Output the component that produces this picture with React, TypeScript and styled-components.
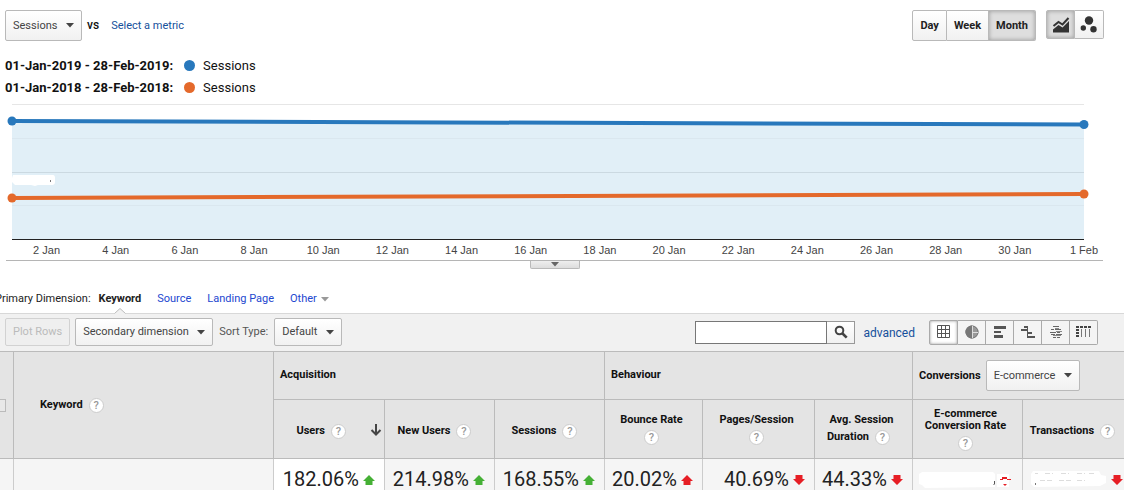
import React from "react";
import styled, { createGlobalStyle, css } from "styled-components";

const GlobalStyle = createGlobalStyle`
  * { box-sizing: border-box; }
  body { margin: 0; background: #fff; color: #222; font: 11px/14px Roboto, sans-serif; }
  button, input, select { font: inherit; color: inherit; margin: 0; }
  a { text-decoration: none; }
`;

const Page = styled.main`
  overflow: hidden;
`;

/* ---------- shared controls ---------- */

const raised = css`
  border: 1px solid #b9b9b9;
  border-radius: 2px;
  background: linear-gradient(#fff, #f1f1f1);
`;

const SelectBox = styled.label<{ $height: number }>`
  ${raised}
  display: inline-flex;
  align-items: center;
  position: relative;
  height: ${(p) => p.$height}px;
`;

const NativeSelect = styled.select`
  appearance: none;
  border: 0;
  outline: 0;
  height: 100%;
  padding: 0 23px 0 7px;
  background: transparent;
  color: #444;
`;

const CaretSlot = styled.span`
  position: absolute;
  right: 7px;
  display: flex;
  pointer-events: none;
`;

const Caret = ({ color = "#444" }: { color?: string }) => (
  <svg width="8" height="5" viewBox="0 0 8 5" aria-hidden="true">
    <path d="M0 0h8L4 4.6z" fill={color} />
  </svg>
);

const Select = ({ label, value, height }: { label: string; value: string; height: number }) => (
  <SelectBox $height={height}>
    <NativeSelect aria-label={label} defaultValue={value}>
      <option>{value}</option>
    </NativeSelect>
    <CaretSlot>
      <Caret />
    </CaretSlot>
  </SelectBox>
);

const HelpButton = styled.button`
  width: 15px;
  height: 15px;
  margin: 0 6px;
  padding: 0;
  border: 1px solid #ccc;
  border-radius: 50%;
  background: #fff;
  color: #999;
  font-size: 11px;
  font-weight: 500;
  line-height: 13px;
  text-align: center;
  vertical-align: middle;
`;

const Help = ({ topic }: { topic: string }) => (
  <HelpButton type="button" title={`Help: ${topic}`}>?</HelpButton>
);

/* ---------- metric bar ---------- */

const MetricBar = styled.header`
  display: flex;
  align-items: flex-start;
  padding: 10px 20px 0 5px;
`;

const MetricPick = styled.div`
  display: flex;
  align-items: center;
  flex: 1;
`;

const Versus = styled.span`
  margin: 0 12px 2px 5px;
  color: #111;
  font-size: 12px;
  font-weight: 500;
`;

const MetricLink = styled.a`
  color: #15509b;
`;

const Segments = styled.div`
  display: flex;
  margin-left: 10px;
`;

const Segment = styled.button<{ $active?: boolean; $icon?: boolean }>`
  ${raised}
  display: flex;
  align-items: center;
  justify-content: center;
  width: ${(p) => (p.$icon ? "29px" : "auto")};
  height: ${(p) => (p.$icon ? 29 : 31)}px;
  padding: 0 ${(p) => (p.$icon ? 0 : 7)}px;
  font-weight: 700;
  border-radius: 0;
  & + & { border-left: 0; }
  &:first-child { border-radius: 2px 0 0 2px; }
  &:last-child { border-radius: 0 2px 2px 0; }
  ${(p) =>
    p.$active &&
    css`
      background: #dedede;
      box-shadow: inset 0 0 4px #999;
    `}
`;

/* ---------- legend ---------- */

const Legend = styled.ul`
  margin: 14px 0 0;
  padding: 0 5px;
  list-style: none;
  color: #111;
  font-size: 13px;
  line-height: 22px;
`;

const LegendRow = styled.li`
  display: flex;
  align-items: center;
`;

const Swatch = styled.span<{ $color: string }>`
  width: 11px;
  height: 11px;
  margin: 0 8px 1px 11px;
  border-radius: 50%;
  background: ${(p) => p.$color};
`;

/* ---------- chart ---------- */

const ChartPanel = styled.section`
  margin: 0 21px 0 6px;
  padding: 0 19px 0 6px;
  border-bottom: 1px solid #b5b5b5;
`;

const ChartSvg = styled.svg`
  display: block;
  width: 100%;
  height: 161px;
  overflow: visible;
  font: 11px "Liberation Sans", sans-serif;
`;

const HandleRow = styled.div`
  display: flex;
  justify-content: center;
  margin: 0 21px 0 6px;
`;

const Handle = styled.button`
  display: flex;
  align-items: center;
  justify-content: center;
  width: 50px;
  height: 8px;
  padding: 0;
  border: 1px solid #b9b9b9;
  border-top: 0;
  border-radius: 0 0 2px 2px;
  background: linear-gradient(#eee, #ddd);
`;

const BLUE = "#2878bc";
const ORANGE = "#e4692b";
const days = Array.from({ length: 15 }, (_, i) => (i + 1) * 2);

const Chart = () => (
  <ChartSvg role="img" aria-label="Sessions per month">
    <svg width="100%" height="141" viewBox="0 0 100 141" preserveAspectRatio="none">
      <path d="M0 22L100 25.500V141H0z" fill="#e1eff7" />
    </svg>
    <g shapeRendering="crispEdges">
      <rect y="5" width="100%" height="1" fill="#e6e6e6" />
      <rect y="39" width="100%" height="1" fill="#dae7ef" />
      <rect y="73" width="100%" height="1" fill="#cbd9e1" />
      <rect y="106" width="100%" height="1" fill="#dae7ef" />
      <rect y="140" width="100%" height="1" fill="#222" />
    </g>
    <path d="M1 76h40q2 0 2 3v4q0 3-3 3H26l-3 1-4-1H3l-3-3v-4z" fill="#fff" />
    <path d="M38.500 81v2" stroke="#777" />
    <line x1="0" y1="22" x2="100%" y2="25.500" stroke={BLUE} strokeWidth="4" />
    <line x1="0" y1="99" x2="100%" y2="95" stroke={ORANGE} strokeWidth="4" />
    <circle cx="0" cy="22" r="4.500" fill={BLUE} />
    <circle cx="100%" cy="25.500" r="4.500" fill={BLUE} />
    <circle cx="0" cy="99" r="4.500" fill={ORANGE} />
    <circle cx="100%" cy="95" r="4.500" fill={ORANGE} />
    <path d="M3 18l3-2h8l5 3h4l2-2h17" fill="none" stroke="#fff" strokeWidth="2" />
    <g fill="#444" textAnchor="middle">
      {days.map((d) => (
        <text key={d} x={`${((d - 1) / 31) * 100}%`} y="155">{`${d} Jan`}</text>
      ))}
      <text x="100%" y="155">1 Feb</text>
    </g>
  </ChartSvg>
);

/* ---------- dimensions ---------- */

const Dimensions = styled.nav`
  display: flex;
  align-items: flex-start;
  gap: 16px;
  margin: 23px 0 0 -5px;
  height: 21px;
  color: #222;
`;

const DimensionLabel = styled.span`
  margin-right: -8px;
  white-space: nowrap;
`;

const DimensionLink = styled.a<{ $current?: boolean }>`
  display: flex;
  align-items: center;
  gap: 4px;
  position: relative;
  color: ${(p) => (p.$current ? "#222" : "#2347cf")};
  font-weight: ${(p) => (p.$current ? 700 : 400)};
  white-space: nowrap;
`;

const Pointer = styled.svg`
  position: absolute;
  top: 16px;
  left: 50%;
  margin-left: -6px;
`;

/* ---------- toolbar ---------- */

const Toolbar = styled.div`
  display: flex;
  align-items: center;
  height: 39px;
  padding: 0 26px 1px 5px;
  border-top: 1px solid #d8d8d8;
  border-bottom: 1px solid #bbb;
  background: #f1f1f1;
`;

const PlotRows = styled.button`
  height: 28px;
  margin-right: 5px;
  padding: 0 7px;
  border: 1px solid #d2d2d2;
  border-radius: 2px;
  background: #efefef;
  color: #bbb;
`;

const SortLabel = styled.span`
  margin: 0 6px;
  color: #555;
`;

const Search = styled.form`
  display: flex;
  margin-left: auto;
`;

const SearchInput = styled.input`
  width: 132px;
  height: 23px;
  padding: 0 4px;
  border: 1px solid #777;
  border-radius: 0;
  background: #fff;
`;

const SearchButton = styled.button`
  display: flex;
  align-items: center;
  justify-content: center;
  width: 28px;
  height: 23px;
  padding: 0;
  border: 1px solid #999;
  border-left: 0;
  background: linear-gradient(#fff, #f1f1f1);
`;

const Advanced = styled.a`
  margin: 2px 14px 0 8px;
  color: #15509b;
  font-size: 12px;
`;

const Views = styled.div`
  display: flex;
`;

const ViewButton = styled.button<{ $active?: boolean }>`
  display: flex;
  align-items: center;
  justify-content: center;
  width: 28px;
  height: 25px;
  padding: 0;
  border: 1px solid #aaa;
  border-left: 0;
  background: ${(p) => (p.$active ? "#fff" : "#f4f4f4")};
  box-shadow: ${(p) => (p.$active ? "inset 0 0 3px #999" : "none")};
  &:first-child { width: 29px; border-left: 1px solid #aaa; border-radius: 2px 0 0 2px; }
  &:last-child { border-radius: 0 2px 2px 0; }
`;

const icon = { width: 16, height: 14, viewBox: "0 0 16 14", "aria-hidden": true } as const;

const views: { name: string; art: React.ReactNode }[] = [
  {
    name: "Data",
    art: (
      <svg {...icon}>
        <path d="M1.500.5h12v12h-12zM5.500.5v12M9.500.5v12M1.500 4.500h12M1.500 8.500h12" fill="none" stroke="#555" />
      </svg>
    ),
  },
  {
    name: "Percentage",
    art: (
      <svg {...icon}>
        <circle cx="8" cy="7" r="6.500" fill="#999" />
        <path d="M8 .5a6.500 6.500 0 0 0 0 13z" fill="#777" />
        <circle cx="8" cy="7" r="6" fill="none" stroke="#777" />
        <path d="M8.500 1v12M8.500 7.500H14" stroke="#ddd" />
      </svg>
    ),
  },
  {
    name: "Performance",
    art: (
      <svg {...icon}>
        <path d="M2 1h12v3H2zM2 6h7v2H2zM2 10h9v3H2z" fill="#555" />
      </svg>
    ),
  },
  {
    name: "Comparison",
    art: (
      <svg {...icon}>
        <path d="M4 1h4v2H4zM1 4h7v2H1zM7 7h5v2H7zM7 11h8v2H7zM7 1h1v12H7z" fill="#555" />
      </svg>
    ),
  },
  {
    name: "Term cloud",
    art: (
      <svg {...icon}>
        <path d="M5 1.500h6M3 4.500h3M7 4.500h6M2 7.500h6M9 7.500h3M3 9.500h4M8 9.500h6M5 12.500h3M9 12.500h3" stroke="#666" />
        <path d="M7 3.500h4M8 6.500h6M5 10.500h8" stroke="#888" />
      </svg>
    ),
  },
  {
    name: "Pivot",
    art: (
      <svg {...icon}>
        <path d="M0 1h3v2H0zM4 1h3v2H4zM8 1h3v2H8zM12 1h3v2h-3zM0 4h3v2H0zM0 7h3v2H0zM0 10h3v2H0z" fill="#444" />
        <path d="M5.500 4v8M9.500 4v8M13.500 4v8" stroke="#777" />
      </svg>
    ),
  },
];

/* ---------- report table ---------- */

const TableFrame = styled.div`
  margin-right: -8px;
`;

const Report = styled.table`
  width: 100%;
  table-layout: fixed;
  border-collapse: separate;
  border-spacing: 0;
`;

const Col = styled.col<{ $width?: number }>`
  width: ${(p) => (p.$width ? `${p.$width}px` : "auto")};
`;

const Head = styled.th<{ $start?: boolean; $height?: number }>`
  height: ${(p) => (p.$height ? `${p.$height}px` : "auto")};
  padding: 0 6px;
  border-left: 1px solid #bbb;
  border-bottom: 1px solid #bbb;
  background: #e4e4e4;
  color: #111;
  font-weight: 700;
  line-height: 12px;
  text-align: ${(p) => (p.$start ? "left" : "center")};
  &:first-child[rowspan] { padding: 0; border-left: 0; }
`;

const GroupName = styled.div`
  padding-bottom: 2px;
`;

const KeywordHead = styled.div`
  display: flex;
  align-items: center;
  padding-left: 20px;
`;

const CheckBox = styled.input`
  appearance: none;
  display: block;
  width: 13px;
  height: 13px;
  margin-left: -7px;
  border: 1px solid #bbb;
  background: #e8e8e8;
`;

const HeadFlow = styled.div<{ $sorted?: boolean; $stack?: boolean }>`
  display: flex;
  flex-direction: ${(p) => (p.$stack ? "column" : "row")};
  align-items: center;
  justify-content: ${(p) => (p.$sorted ? "flex-end" : "center")};
  gap: ${(p) => (p.$stack ? 4 : 0)}px;
  margin: ${(p) => (p.$sorted ? "0 -4px" : "0 -2px 0 -6px")};
  padding-top: ${(p) => (p.$stack ? 0 : 4)}px;
  white-space: nowrap;
`;

const HeadLine = styled.span`
  display: flex;
  align-items: center;
`;

const SortIcon = styled.svg`
  margin: 0 0 2px 18px;
`;

const ConversionHead = styled.div`
  display: flex;
  align-items: center;
  gap: 5px;
  font-weight: 700;
  select { font-weight: 400; }
`;

const Value = styled.td<{ $sorted?: boolean }>`
  padding: 9px 9px 0 0;
  border-left: 1px solid #ccc;
  background: ${(p) => (p.$sorted ? "#fff" : "#f5f5f5")};
  font-size: 20px;
  line-height: 22px;
  &:first-child { border-left: 0; }
`;

const Figure = styled.span`
  display: flex;
  align-items: center;
  justify-content: flex-end;
  gap: 4px;
`;

const Trend = ({ up, color }: { up?: boolean; color: string }) => (
  <svg width="12" height="12" viewBox="0 0 12 12" aria-hidden="true">
    <path d={up ? "M6 2l6 6H9.500v4h-7V8H0z" : "M6 12l6-6H9.500V2h-7v4H0z"} fill={color} />
  </svg>
);

const GREEN = "#45b035";
const RED = "#e61e25";

const figures = [
  { value: "182.06%", up: true, color: GREEN },
  { value: "214.98%", up: true, color: GREEN },
  { value: "168.55%", up: true, color: GREEN },
  { value: "20.02%", up: true, color: RED },
  { value: "40.69%", up: false, color: RED },
  { value: "44.33%", up: false, color: RED },
];

export default function App() {
  return (
    <Page>
      <GlobalStyle />
      <MetricBar>
        <MetricPick>
          <Select label="Metric" value="Sessions" height={31} />
          <Versus>vs</Versus>
          <MetricLink href="#metric">Select a metric</MetricLink>
        </MetricPick>
        <Segments>
          <Segment type="button">Day</Segment>
          <Segment type="button">Week</Segment>
          <Segment type="button" $active>Month</Segment>
        </Segments>
        <Segments>
          <Segment type="button" $icon $active aria-label="Line chart">
            <svg width="18" height="18" viewBox="0 0 18 18" aria-hidden="true">
              <path d="M1.500 10L6.500 6l4 2.500L16.500 2" fill="none" stroke="#333" strokeWidth="2" />
              <path d="M1 16.500v-3l5.500-4.500 4 2.500L17 5v11.500z" fill="#333" />
            </svg>
          </Segment>
          <Segment type="button" $icon aria-label="Motion chart">
            <svg width="18" height="18" viewBox="0 0 18 18" aria-hidden="true" fill="#333">
              <circle cx="9" cy="4.500" r="4.200" />
              <circle cx="3.300" cy="12" r="2.700" />
              <circle cx="13.500" cy="13.200" r="3.200" />
            </svg>
          </Segment>
        </Segments>
      </MetricBar>

      <Legend>
        <LegendRow>
          <strong>01-Jan-2019 - 28-Feb-2019:</strong>
          <Swatch $color={BLUE} />
          Sessions
        </LegendRow>
        <LegendRow>
          <strong>01-Jan-2018 - 28-Feb-2018:</strong>
          <Swatch $color={ORANGE} />
          Sessions
        </LegendRow>
      </Legend>

      <ChartPanel>
        <Chart />
      </ChartPanel>
      <HandleRow>
        <Handle type="button" aria-label="Collapse chart">
          <Caret color="#666" />
        </Handle>
      </HandleRow>

      <Dimensions>
        <DimensionLabel>Primary Dimension:</DimensionLabel>
        <DimensionLink href="#keyword" $current>
          Keyword
          <Pointer width="12" height="6" viewBox="0 0 12 6" aria-hidden="true">
            <path d="M0 6L6 .5 12 6z" fill="#f1f1f1" />
            <path d="M.5 5.500L6 .5l5.500 5" fill="none" stroke="#bbb" />
          </Pointer>
        </DimensionLink>
        <DimensionLink href="#source">Source</DimensionLink>
        <DimensionLink href="#landing">Landing Page</DimensionLink>
        <DimensionLink href="#other">
          Other <Caret color="#999" />
        </DimensionLink>
      </Dimensions>

      <Toolbar>
        <PlotRows type="button" disabled>Plot Rows</PlotRows>
        <Select label="Secondary dimension" value="Secondary dimension" height={28} />
        <SortLabel>Sort Type:</SortLabel>
        <Select label="Sort type" value="Default" height={28} />
        <Search>
          <SearchInput type="search" aria-label="Search keywords" />
          <SearchButton type="button" aria-label="Search">
            <svg width="14" height="14" viewBox="0 0 14 14" aria-hidden="true" fill="none" stroke="#444">
              <circle cx="5.500" cy="5.500" r="3.800" strokeWidth="2" />
              <path d="M8.500 8.500l4.200 4.200" strokeWidth="2.600" />
            </svg>
          </SearchButton>
        </Search>
        <Advanced href="#advanced">advanced</Advanced>
        <Views>
          {views.map((v, i) => (
            <ViewButton key={v.name} type="button" aria-label={v.name} $active={i === 0}>
              {v.art}
            </ViewButton>
          ))}
        </Views>
      </Toolbar>

      <TableFrame>
        <Report>
          <colgroup>
            <Col $width={13} />
            <Col />
            <Col $width={111} />
            <Col $width={110} />
            <Col $width={110} />
            <Col $width={98} />
            <Col $width={112} />
            <Col $width={98} />
            <Col $width={110} />
            <Col $width={110} />
          </colgroup>
          <thead>
            <tr>
              <Head rowSpan={2}>
                <CheckBox type="checkbox" aria-label="Select all rows" />
              </Head>
              <Head rowSpan={2} $start>
                <KeywordHead>
                  Keyword
                  <Help topic="Keyword" />
                </KeywordHead>
              </Head>
              <Head colSpan={3} $start $height={48}>
                <GroupName>Acquisition</GroupName>
              </Head>
              <Head colSpan={3} $start>
                <GroupName>Behaviour</GroupName>
              </Head>
              <Head colSpan={2} $start>
                <ConversionHead>
                  Conversions
                  <Select label="Conversions" value="E-commerce" height={31} />
                </ConversionHead>
              </Head>
            </tr>
            <tr>
              <Head $height={59}>
                <HeadFlow $sorted>
                  Users
                  <Help topic="Users" />
                  <SortIcon width="12" height="12" viewBox="0 0 12 12" aria-hidden="true">
                    <path d="M6 0v10M1.500 6L6 10.500 10.500 6" fill="none" stroke="#444" strokeWidth="2" />
                  </SortIcon>
                </HeadFlow>
              </Head>
              <Head>
                <HeadFlow>
                  New Users
                  <Help topic="New Users" />
                </HeadFlow>
              </Head>
              <Head>
                <HeadFlow>
                  Sessions
                  <Help topic="Sessions" />
                </HeadFlow>
              </Head>
              <Head>
                <HeadFlow $stack>
                  Bounce Rate
                  <Help topic="Bounce Rate" />
                </HeadFlow>
              </Head>
              <Head>
                <HeadFlow $stack>
                  Pages/Session
                  <Help topic="Pages/Session" />
                </HeadFlow>
              </Head>
              <Head>
                <HeadFlow $stack>
                  Avg. Session
                  <HeadLine>
                    Duration
                    <Help topic="Avg. Session Duration" />
                  </HeadLine>
                </HeadFlow>
              </Head>
              <Head>
                <HeadFlow $stack>
                  <span>
                    E-commerce
                    <br />
                    Conversion Rate
                  </span>
                  <Help topic="E-commerce Conversion Rate" />
                </HeadFlow>
              </Head>
              <Head>
                <HeadFlow>
                  Transactions
                  <Help topic="Transactions" />
                </HeadFlow>
              </Head>
            </tr>
          </thead>
          <tbody>
            <tr>
              <Value />
              <Value />
              {figures.map((f, i) => (
                <Value key={f.value} $sorted={i === 0}>
                  <Figure>
                    {f.value}
                    <Trend up={f.up} color={f.color} />
                  </Figure>
                </Value>
              ))}
              <Value>
                <Figure>
                  <svg width="94" height="18" viewBox="0 0 94 18" aria-hidden="true">
                    <path d="M3 2h71l2 2v13l-70 1-3-3-3-1V4z" fill="#fff" />
                    <path d="M75.500 11v3l-1 1" fill="none" stroke="#555" />
                    <path d="M78 4h12v13H78z" fill="#fff" />
                    <path d="M83 7h5v2h-5zM81 9h3v1h-3zM88 9h4v1h-4zM84 14h4l-2 2z" fill={RED} />
                  </svg>
                </Figure>
              </Value>
              <Value>
                <Figure>
                  <svg width="76" height="18" viewBox="0 0 76 18" aria-hidden="true">
                    <path d="M2 1h66l2 4 5 1v7l-6 3-66 1-3-3V4z" fill="#fff" />
                    <path d="M4.500 13v2" stroke="#777" />
                    <path d="M4 3.500h3M14 3.500h8M30 3.500h8M46 3.500h8M58 3.500h6M9 10.500h14M28 10.500h12M46 10.500h8" stroke="#ddd" strokeDasharray="5 2" />
                  </svg>
                  <Trend color={RED} />
                </Figure>
              </Value>
            </tr>
          </tbody>
        </Report>
      </TableFrame>
    </Page>
  );
}
